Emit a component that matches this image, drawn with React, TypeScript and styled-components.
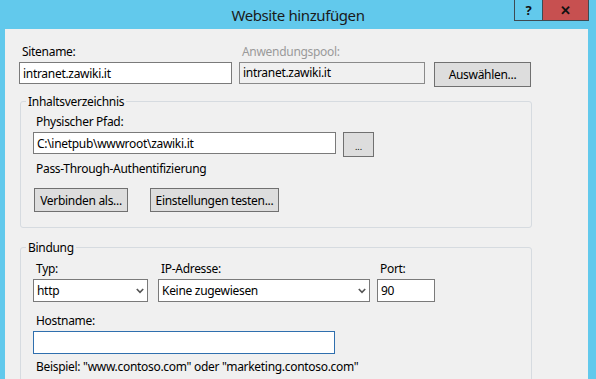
import React from "react";
import styled, { createGlobalStyle } from "styled-components";

const GlobalStyle = createGlobalStyle`
  html, body {
    margin: 0;
    padding: 0;
    background: #62c9ec;
  }
  * {
    box-sizing: border-box;
  }
`;

// outer window frame, blue border around the dialog
const Window = styled.div`
  width: 596px;
  height: 379px;
  overflow: hidden;
  display: flex;
  flex-direction: column;
  background: #62c9ec;
  font-family: "Noto Sans", "Segoe UI", sans-serif;
  font-size: 12px;
  letter-spacing: -0.3px;
  color: #000;
`;

const TitleBar = styled.div`
  height: 29px;
  flex-shrink: 0;
  display: grid;
  grid-template-columns: 1fr auto 1fr;
  align-items: center;
`;

const Title = styled.div`
  grid-column: 2;
  font-size: 15px;
  line-height: 20px;
  letter-spacing: -0.4px;
  color: #1a1a1a;
`;

const CaptionButtons = styled.div`
  grid-column: 3;
  justify-self: end;
  align-self: start;
  display: flex;
  margin-right: 7px;
  border: 1px solid #3e4a52;
  border-top: none;
`;

const CaptionButton = styled.div<{ $close?: boolean }>`
  width: ${(p) => (p.$close ? "46px" : "27px")};
  height: 20px;
  display: flex;
  align-items: center;
  justify-content: center;
  background: ${(p) => (p.$close ? "#c75050" : "#62c9ec")};
  border-left: ${(p) => (p.$close ? "1px solid #3e4a52" : "none")};
  font-weight: bold;
  font-size: 13px;
  letter-spacing: 0;
  color: #111;
`;

const Client = styled.div`
  flex: 1;
  margin: 0 8px 0 5px;
  background: #f0f0f0;
  padding: 15px 0 0 14px;
`;

const TopRow = styled.div`
  display: flex;
  align-items: flex-start;
`;

const Field = styled.div<{ $width: number; $gap?: number }>`
  width: ${(p) => p.$width}px;
  margin-right: ${(p) => p.$gap ?? 0}px;
  display: flex;
  flex-direction: column;
`;

const Label = styled.div<{ $disabled?: boolean }>`
  line-height: 15px;
  height: 15px;
  padding-left: 3px;
  margin-bottom: 3px;
  white-space: nowrap;
  color: ${(p) => (p.$disabled ? "#9a9a9a" : "#000")};
`;

const TextBox = styled.input<{ $h?: number; $focus?: boolean }>`
  width: 100%;
  height: ${(p) => p.$h ?? 22}px;
  margin: 0;
  padding: 0 0 0 3px;
  border: 1px solid ${(p) => (p.$focus ? "#2f6fae" : "#7a7a7a")};
  background: #fff;
  font: inherit;
  letter-spacing: inherit;
  color: #000;
  outline: none;
`;

const DisabledBox = styled.div`
  width: 100%;
  height: 22px;
  border: 1px solid #8a8a8a;
  background: #f0f0f0;
  padding-left: 3px;
  line-height: 20px;
  white-space: nowrap;
`;

const Button = styled.div<{ $width: number; $height?: number; $top?: number }>`
  width: ${(p) => p.$width}px;
  height: ${(p) => p.$height ?? 24}px;
  margin-top: ${(p) => p.$top ?? 0}px;
  flex-shrink: 0;
  border: 1px solid #707070;
  background: #dddddd;
  display: flex;
  align-items: center;
  justify-content: center;
  white-space: nowrap;
  color: #000;
`;

const Group = styled.fieldset<{ $top: number }>`
  width: 512px;
  margin: ${(p) => p.$top}px 0 0 1px;
  padding: 5px 0 15px 12px;
  border: 1px solid #d6dbe0;
  border-radius: 3px;
`;

const Legend = styled.legend`
  margin-left: -7px;
  padding: 0 2px;
  line-height: 15px;
  color: #000;
`;

const Row = styled.div<{ $gap: number; $top?: number; $left?: number }>`
  display: flex;
  align-items: flex-start;
  gap: ${(p) => p.$gap}px;
  margin-top: ${(p) => p.$top ?? 0}px;
  margin-left: ${(p) => p.$left ?? 0}px;
`;

const Text = styled.div<{ $top: number }>`
  margin-top: ${(p) => p.$top}px;
  padding-left: 3px;
  line-height: 15px;
  white-space: nowrap;
`;

const Dots = styled.span`
  font-size: 9px;
  letter-spacing: 0;
  margin-top: 4px;
`;

const SelectBox = styled.div`
  height: 23px;
  border: 1px solid #7a7a7a;
  background: #fff;
  display: flex;
  align-items: center;
  justify-content: space-between;
  padding: 0 3px 0 3px;
  white-space: nowrap;
`;

const Chevron = () => (
  <svg width="8" height="6" viewBox="0 0 8 6">
    <polyline points="0.8,1 4,4.4 7.2,1" fill="none" stroke="#555" strokeWidth="1.6" />
  </svg>
);

const App: React.FC = () => {
  return (
    <>
      <GlobalStyle />
      <Window>
        <TitleBar>
          <Title>Website hinzufügen</Title>
          <CaptionButtons>
            <CaptionButton>?</CaptionButton>
            <CaptionButton $close>✕</CaptionButton>
          </CaptionButtons>
        </TitleBar>

        <Client>
          <TopRow>
            <Field $width={213} $gap={7}>
              <Label>Sitename:</Label>
              <TextBox readOnly value="intranet.zawiki.it" />
            </Field>
            <Field $width={186} $gap={9}>
              <Label $disabled>Anwendungspool:</Label>
              <DisabledBox>intranet.zawiki.it</DisabledBox>
            </Field>
            <Button $width={97} $height={25} $top={18}>
              Auswählen...
            </Button>
          </TopRow>

          <Group $top={7}>
            <Legend>Inhaltsverzeichnis</Legend>
            <Label>Physischer Pfad:</Label>
            <Row $gap={7}>
              <Field $width={303}>
                <TextBox readOnly value="C:\inetpub\wwwroot\zawiki.it" />
              </Field>
              <Button $width={31} $height={25}>
                <Dots>...</Dots>
              </Button>
            </Row>
            <Text $top={4}>Pass-Through-Authentifizierung</Text>
            <Row $gap={22} $top={12} $left={1}>
              <Button $width={94}>Verbinden als...</Button>
              <Button $width={129}>Einstellungen testen...</Button>
            </Row>
          </Group>

          <Group $top={12}>
            <Legend>Bindung</Legend>
            <Row $gap={0} $top={1}>
              <Field $width={115} $gap={10}>
                <Label>Typ:</Label>
                <SelectBox>
                  http
                  <Chevron />
                </SelectBox>
              </Field>
              <Field $width={212} $gap={7}>
                <Label>IP-Adresse:</Label>
                <SelectBox>
                  Keine zugewiesen
                  <Chevron />
                </SelectBox>
              </Field>
              <Field $width={58}>
                <Label>Port:</Label>
                <TextBox $h={23} readOnly value="90" />
              </Field>
            </Row>
            <Row $gap={0} $top={11}>
              <Field $width={302}>
                <Label>Hostname:</Label>
                <TextBox $h={23} $focus readOnly value="" />
              </Field>
            </Row>
            <Text $top={5}>Beispiel: "www.contoso.com" oder "marketing.contoso.com"</Text>
          </Group>
        </Client>
      </Window>
    </>
  );
};

export default App;
